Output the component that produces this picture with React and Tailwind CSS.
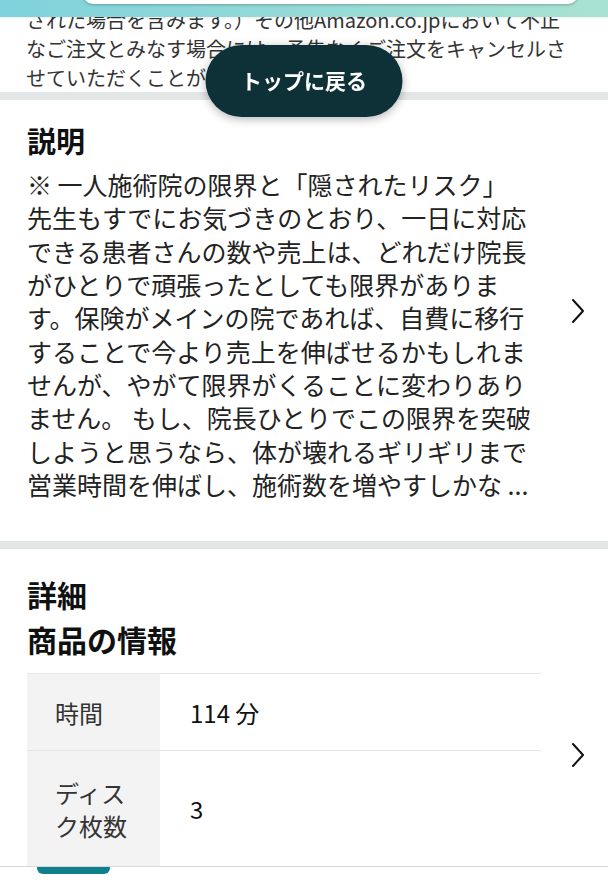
import React from "react";

const font = { fontFamily: '"Noto Sans CJK JP", "Noto Sans", sans-serif' };

function Chevron() {
  return (
    <svg width="14" height="26" viewBox="0 0 14 26" className="shrink-0" fill="none">
      <polyline points="2,2 12,13 2,24" stroke="#0f1111" strokeWidth="2" strokeLinecap="round" strokeLinejoin="round" />
    </svg>
  );
}

const descLines = [
  "※ 一人施術院の限界と「隠されたリスク」",
  "先生もすでにお気づきのとおり、一日に対応",
  "できる患者さんの数や売上は、どれだけ院長",
  "がひとりで頑張ったとしても限界がありま",
  "す。保険がメインの院であれば、自費に移行",
  "することで今より売上を伸ばせるかもしれま",
  "せんが、やがて限界がくることに変わりあり",
  "ません。 もし、院長ひとりでこの限界を突破",
  "しようと思うなら、体が壊れるギリギリまで",
  "営業時間を伸ばし、施術数を増やすしかな ...",
];

export default function App() {
  return (
    <div className="relative min-h-screen bg-white text-[#0f1111]" style={font}>
      {/* header */}
      <div className="fixed top-0 inset-x-0 z-20 h-[17px] overflow-hidden bg-gradient-to-r from-[#7fd2dc] to-[#a8e2d1] px-[30px] pl-[83px] shadow-[0_1px_2px_rgba(0,0,0,0.08)]">
        <div className="-mt-[16px] h-[20px] rounded-[10px] bg-white shadow-[0_1px_3px_rgba(0,0,0,0.25)]" />
      </div>

      {/* back to top */}
      <div className="fixed top-[45px] left-1/2 z-30 flex h-[72px] w-[197px] -translate-x-1/2 items-center justify-center rounded-full bg-[#0e3137] text-[21px] font-bold text-white shadow-[0_2px_10px_rgba(0,0,0,0.3)]">
        トップに戻る
      </div>

      {/* previous section tail */}
      <div className="px-[26px] pt-[5px] text-[20px] leading-[29px] text-[#333]">
        <div className="whitespace-nowrap">された場合を含みます。）その他Amazon.co.jpにおいて不正</div>
        <div className="whitespace-nowrap">なご注文とみなす場合には、予告なくご注文をキャンセルさ</div>
        <div className="whitespace-nowrap">せていただくことがあります。</div>
      </div>
      <div className="h-[8px] bg-[#e3e6e6]" />

      {/* description */}
      <div className="flex items-center pl-[27px] pr-[23px] pt-[20px] pb-[40px]">
        <div className="flex-1">
          <div className="text-[29px] font-bold leading-[40px]">説明</div>
          <div className="mt-[8px] text-[25px] leading-[33.33px] text-[#222]">
            {descLines.map((l, i) => (
              <div key={i} className="whitespace-nowrap">{l}</div>
            ))}
          </div>
        </div>
        <Chevron />
      </div>
      <div className="h-[8px] bg-[#e3e6e6]" />

      {/* details */}
      <div className="flex items-center pl-[27px] pr-[23px] pt-[23px]">
        <div className="flex-1">
          <div className="text-[30px] font-bold leading-[45px]">詳細</div>
          <div className="text-[30px] font-bold leading-[45px]">商品の情報</div>
          <div className="mt-[11px] w-[514px] text-[24px] leading-[33px]">
            <div className="grid h-[77px] grid-cols-[133px_1fr] border-t border-[#e7e7e7]">
              <div className="flex items-center bg-[#f3f3f3] pl-[28px] text-[#333]">時間</div>
              <div className="flex items-center pl-[30px]">114 分</div>
            </div>
            <div className="grid h-[116px] grid-cols-[133px_1fr] border-t border-[#e7e7e7]">
              <div className="flex items-center bg-[#f3f3f3] pl-[28px] text-[#333]">
                <div>
                  <div>ディス</div>
                  <div>ク枚数</div>
                </div>
              </div>
              <div className="flex items-center pl-[30px]">3</div>
            </div>
            <div className="grid h-[72px] grid-cols-[133px_1fr] border-t border-[#e7e7e7]">
              <div className="bg-[#f3f3f3]" />
              <div />
            </div>
          </div>
        </div>
        <Chevron />
      </div>

      {/* bottom bar */}
      <div className="fixed bottom-0 inset-x-0 z-20 h-[16px] border-t border-[#d5d9d9] bg-white pl-[37px]">
        <div className="h-[7px] w-[73px] rounded-b-[6px] bg-[#0f7f8c]" />
      </div>
    </div>
  );
}
